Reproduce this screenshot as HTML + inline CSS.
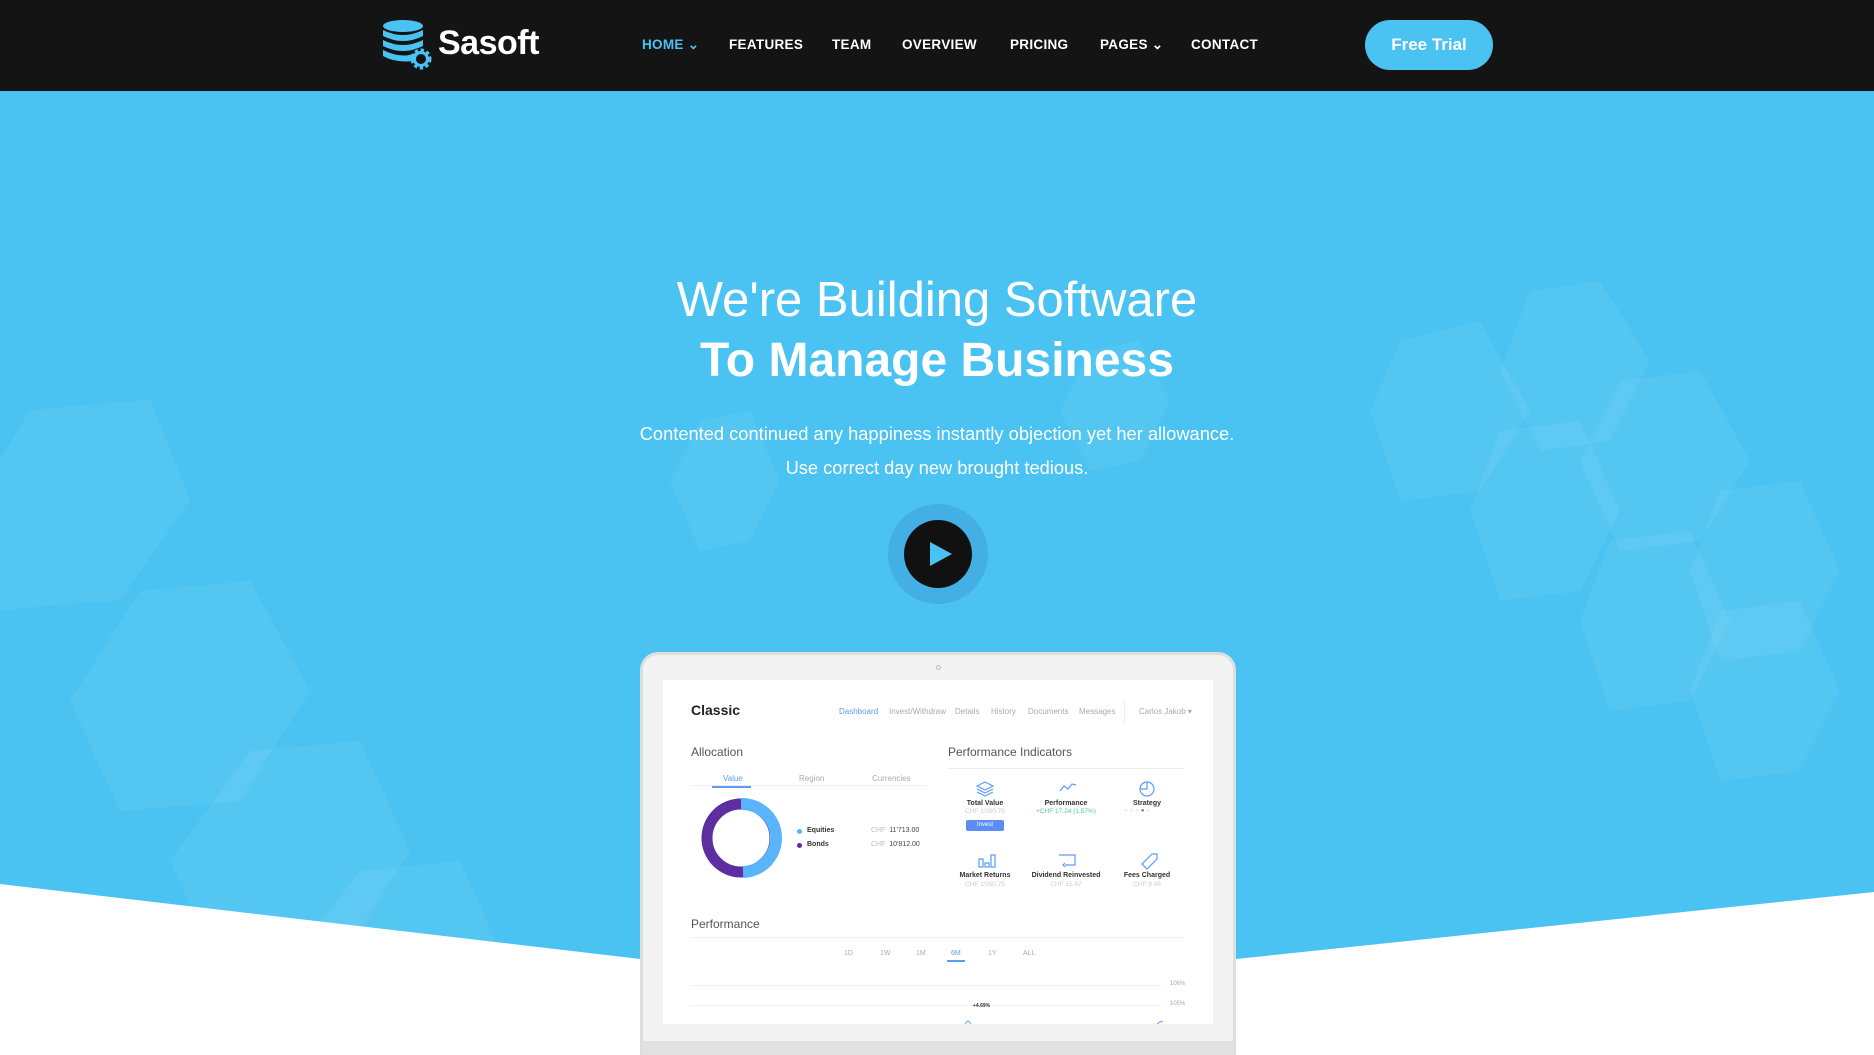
<!DOCTYPE html>
<html><head><meta charset="utf-8"><style>
*{margin:0;padding:0;box-sizing:border-box}
html,body{width:1874px;height:1055px;overflow:hidden}
body{position:relative;background:#4ac3f2;font-family:"Liberation Sans",sans-serif}
.a{position:absolute;white-space:nowrap}
nav{position:absolute;left:0;top:0;width:1874px;height:91px;background:#141414}
.ni{position:absolute;top:37px;font-size:13.5px;font-weight:bold;color:#fff;letter-spacing:.3px}
.d{color:#aaa;font-size:8px}
</style></head><body>
<svg class="a" style="left:0;top:91px" width="1874" height="964">
<g fill="#fff" fill-opacity=".06">
<polygon points="30,410 150,400 190,500 120,600 0,610 -30,510" transform="translate(0,-91)"/>
<polygon points="120,480 230,470 290,580 220,690 100,700 50,590" transform="translate(20,20)"/>
<polygon points="250,660 360,650 410,760 340,870 220,880 170,770"/>
<polygon points="360,780 460,770 500,860 440,960 330,960 290,870"/>
<polygon points="1400,250 1480,230 1530,320 1480,400 1400,410 1370,320"/>
<polygon points="1530,200 1600,190 1650,270 1610,350 1540,360 1500,280"/>
<polygon points="1620,290 1700,280 1750,370 1700,450 1620,460 1580,370"/>
<polygon points="1500,340 1580,330 1620,420 1580,500 1500,510 1470,420"/>
<polygon points="1720,400 1800,390 1840,480 1800,560 1720,570 1690,480"/>
<polygon points="1610,450 1690,440 1730,530 1690,610 1610,620 1580,530"/>
<polygon points="1720,520 1800,510 1840,600 1800,680 1720,690 1690,600"/>
<polygon points="1090,260 1140,250 1170,310 1140,370 1090,380 1060,320"/>
<polygon points="700,330 750,320 780,390 750,450 700,460 670,390"/>
</g>
<polygon points="0,793 640,868 1236,868 1874,801 1874,964 0,964" fill="#fff"/>
</svg>
<nav>
<svg class="a" style="left:382px;top:19px" width="52" height="52" viewBox="0 0 52 52">
<ellipse cx="21" cy="7" rx="20" ry="6" fill="#4ac3f2"/>
<path d="M1 11 q20 10 40 0 v6 q-20 10 -40 0z M1 21 q20 10 40 0 v6 q-20 10 -40 0z M1 31 q20 10 34 2 l-4 9 q-18 2 -30 -5z" fill="#4ac3f2"/>
<circle cx="39" cy="40" r="8" fill="none" stroke="#4ac3f2" stroke-width="5" stroke-dasharray="3 2.3"/>
<circle cx="39" cy="40" r="6.5" fill="none" stroke="#4ac3f2" stroke-width="3"/>
</svg>
<div class="a" style="left:438px;top:24px;font-size:34px;color:#fff;font-weight:bold;letter-spacing:-.5px">Sasoft</div>
<div class="ni" style="left:642px;color:#4ac3f2">HOME ⌄</div>
<div class="ni" style="left:729px">FEATURES</div>
<div class="ni" style="left:832px">TEAM</div>
<div class="ni" style="left:902px">OVERVIEW</div>
<div class="ni" style="left:1010px">PRICING</div>
<div class="ni" style="left:1100px">PAGES ⌄</div>
<div class="ni" style="left:1191px">CONTACT</div>
<div class="a" style="left:1365px;top:20px;width:128px;height:50px;border-radius:25px;background:#4ac3f2;color:#fff;font-size:17px;font-weight:bold;text-align:center;line-height:50px">Free Trial</div>
</nav>
<div class="a" style="left:0;width:1874px;top:272px;text-align:center;color:#fff;font-size:49px;font-weight:300">We're Building Software</div>
<div class="a" style="left:0;width:1874px;top:333px;text-align:center;color:#fff;font-size:48px;font-weight:bold">To Manage Business</div>
<div class="a" style="left:0;width:1874px;top:417px;text-align:center;color:#fff;font-size:18.3px;line-height:34px">Contented continued any happiness instantly objection yet her allowance.<br>Use correct day new brought tedious.</div>
<div class="a" style="left:888px;top:504px;width:100px;height:100px;border-radius:50%;background:rgba(60,150,210,.45)"></div>
<div class="a" style="left:904px;top:520px;width:68px;height:68px;border-radius:50%;background:#111"></div>
<svg class="a" style="left:928px;top:541px" width="26" height="26"><polygon points="2,1 24,13 2,25" fill="#4ac3f2"/></svg>
<div class="a" style="left:640px;top:652px;width:596px;height:403px;border-radius:18px 18px 0 0;background:#f3f3f3;border:3px solid #dedede;border-bottom:none"></div>
<div class="a" style="left:936px;top:665px;width:5px;height:5px;border-radius:50%;border:1px solid #bbb"></div>
<div class="a" style="left:643px;top:1041px;width:590px;height:14px;background:#e2e2e2"></div>
<div class="a" style="left:663px;top:680px;width:550px;height:344px;background:#fff;overflow:hidden">
<div style="position:relative;left:-663px;top:-680px">
<div class="a" style="left:691px;top:702px;font-size:14px;font-weight:bold;color:#222">Classic</div>
<div class="a d" style="left:839px;top:707px;color:#5b9cf4">Dashboard</div>
<div class="a d" style="left:889px;top:707px">Invest/Withdraw</div>
<div class="a d" style="left:955px;top:707px">Details</div>
<div class="a d" style="left:991px;top:707px">History</div>
<div class="a d" style="left:1028px;top:707px">Documents</div>
<div class="a d" style="left:1079px;top:707px">Messages</div>
<div class="a" style="left:1124px;top:700px;width:1px;height:24px;background:#eee"></div>
<div class="a d" style="left:1139px;top:707px">Carlos Jakob ▾</div>
<div class="a" style="left:691px;top:745px;font-size:12px;color:#555">Allocation</div>
<div class="a" style="left:948px;top:745px;font-size:12px;color:#555">Performance Indicators</div>
<div class="a" style="left:691px;top:785px;width:236px;height:1px;background:#eee"></div>
<div class="a" style="left:948px;top:768px;width:236px;height:1px;background:#eee"></div>
<div class="a d" style="left:723px;top:774px;color:#5b9cf4">Value</div>
<div class="a" style="left:712px;top:786px;width:39px;height:2px;background:#5b9cf4"></div>
<div class="a d" style="left:799px;top:774px">Region</div>
<div class="a d" style="left:872px;top:774px">Currencies</div>
<svg class="a" style="left:699px;top:796px" width="86" height="86"><circle cx="42" cy="42" r="34" fill="none" stroke="#5e2ea0" stroke-width="11"/><path d="M42 8 A34 34 0 0 1 44 76" fill="none" stroke="#5ab4fb" stroke-width="12"/></svg>
<div class="a" style="left:797px;top:829px;width:5px;height:5px;border-radius:50%;background:#5ab4fb"></div>
<div class="a" style="left:797px;top:843px;width:5px;height:5px;border-radius:50%;background:#5e2ea0"></div>
<div class="a" style="left:807px;top:827px;font-size:7px;font-weight:bold;color:#333">Equities</div>
<div class="a" style="left:807px;top:841px;font-size:7px;font-weight:bold;color:#333">Bonds</div>
<div class="a" style="left:871px;top:827px;font-size:7px;color:#444"><span style="color:#bbb">CHF</span>&nbsp; 11'713.00</div>
<div class="a" style="left:871px;top:841px;font-size:7px;color:#444"><span style="color:#bbb">CHF</span>&nbsp; 10'812.00</div>
<svg class="a" style="left:976px;top:779px" width="190" height="110" fill="none" stroke="#5b9cf4" stroke-width="1.2">
<path d="M9 3 l8 4 -8 4 -8 -4z M1 10 l8 4 8 -4 M1 13 l8 4 8 -4"/>
<path d="M84 12 l4 -5 4 3 4 -5 4 1"/>
<circle cx="171" cy="10" r="7"/><path d="M171 3 v7 h-7"/>
<path d="M3 80 v8 h4 v-8z M9 84 v4 h4 v-4z M15 76 v12 h4 v-12z"/>
<path d="M83 76 h16 v10 h-10 M89 84 l-2 2 2 2"/>
<path d="M176 75 l-10 10 5 5 10 -10 v-5z"/>
</svg>
<div class="a" style="left:960px;top:800px;width:50px;text-align:center;font-size:7px;font-weight:bold;color:#333">Total Value</div>
<div class="a" style="left:960px;top:808px;width:50px;text-align:center;font-size:6.5px;color:#ccc">CHF 1'050.75</div>
<div class="a" style="left:966px;top:820px;width:38px;height:11px;border-radius:2px;background:#5b8ef4;color:#fff;font-size:6px;text-align:center;line-height:11px">Invest</div>
<div class="a" style="left:1031px;top:800px;width:70px;text-align:center;font-size:7px;font-weight:bold;color:#333">Performance</div>
<div class="a" style="left:1031px;top:808px;width:70px;text-align:center;font-size:6.5px;color:#4cd38a">+CHF 17.24 (1.57%)</div>
<div class="a" style="left:1117px;top:800px;width:60px;text-align:center;font-size:7px;font-weight:bold;color:#333">Strategy</div>
<div class="a" style="left:1124px;top:808px;font-size:6px;color:#bbb;letter-spacing:2px">○○○<span style="color:#777">●</span>○</div>
<div class="a" style="left:955px;top:872px;width:60px;text-align:center;font-size:7px;font-weight:bold;color:#333">Market Returns</div>
<div class="a" style="left:955px;top:881px;width:60px;text-align:center;font-size:6.5px;color:#ccc">CHF 1'050.75</div>
<div class="a" style="left:1026px;top:872px;width:80px;text-align:center;font-size:7px;font-weight:bold;color:#333">Dividend Reinvested</div>
<div class="a" style="left:1026px;top:881px;width:80px;text-align:center;font-size:6.5px;color:#ccc">CHF 15.97</div>
<div class="a" style="left:1117px;top:872px;width:60px;text-align:center;font-size:7px;font-weight:bold;color:#333">Fees Charged</div>
<div class="a" style="left:1117px;top:881px;width:60px;text-align:center;font-size:6.5px;color:#ccc">CHF 9.46</div>
<div class="a" style="left:691px;top:917px;font-size:12px;color:#555">Performance</div>
<div class="a" style="left:691px;top:937px;width:493px;height:1px;background:#eee"></div>
<div class="a d" style="left:844px;top:950px;font-size:7px">1D</div>
<div class="a d" style="left:880px;top:950px;font-size:7px">1W</div>
<div class="a d" style="left:916px;top:950px;font-size:7px">1M</div>
<div class="a d" style="left:951px;top:950px;font-size:7px;color:#5b9cf4">6M</div>
<div class="a" style="left:947px;top:960px;width:18px;height:2px;background:#5b9cf4"></div>
<div class="a d" style="left:988px;top:950px;font-size:7px">1Y</div>
<div class="a d" style="left:1023px;top:950px;font-size:7px">ALL</div>
<div class="a" style="left:691px;top:985px;width:470px;height:1px;background:#eee"></div>
<div class="a" style="left:691px;top:1005px;width:470px;height:1px;background:#eee"></div>
<div class="a d" style="left:1170px;top:981px;font-size:6px">106%</div>
<div class="a d" style="left:1170px;top:1001px;font-size:6px">105%</div>
<div class="a" style="left:973px;top:1003px;font-size:5px;color:#333;font-weight:bold">+4.69%</div>
<svg class="a" style="left:960px;top:1010px" width="210" height="20" fill="none" stroke="#5b9cf4"><path d="M4 18 q4 -14 8 0"/><path d="M195 18 q4 -8 8 -6"/></svg>
</div></div>
</body></html>
